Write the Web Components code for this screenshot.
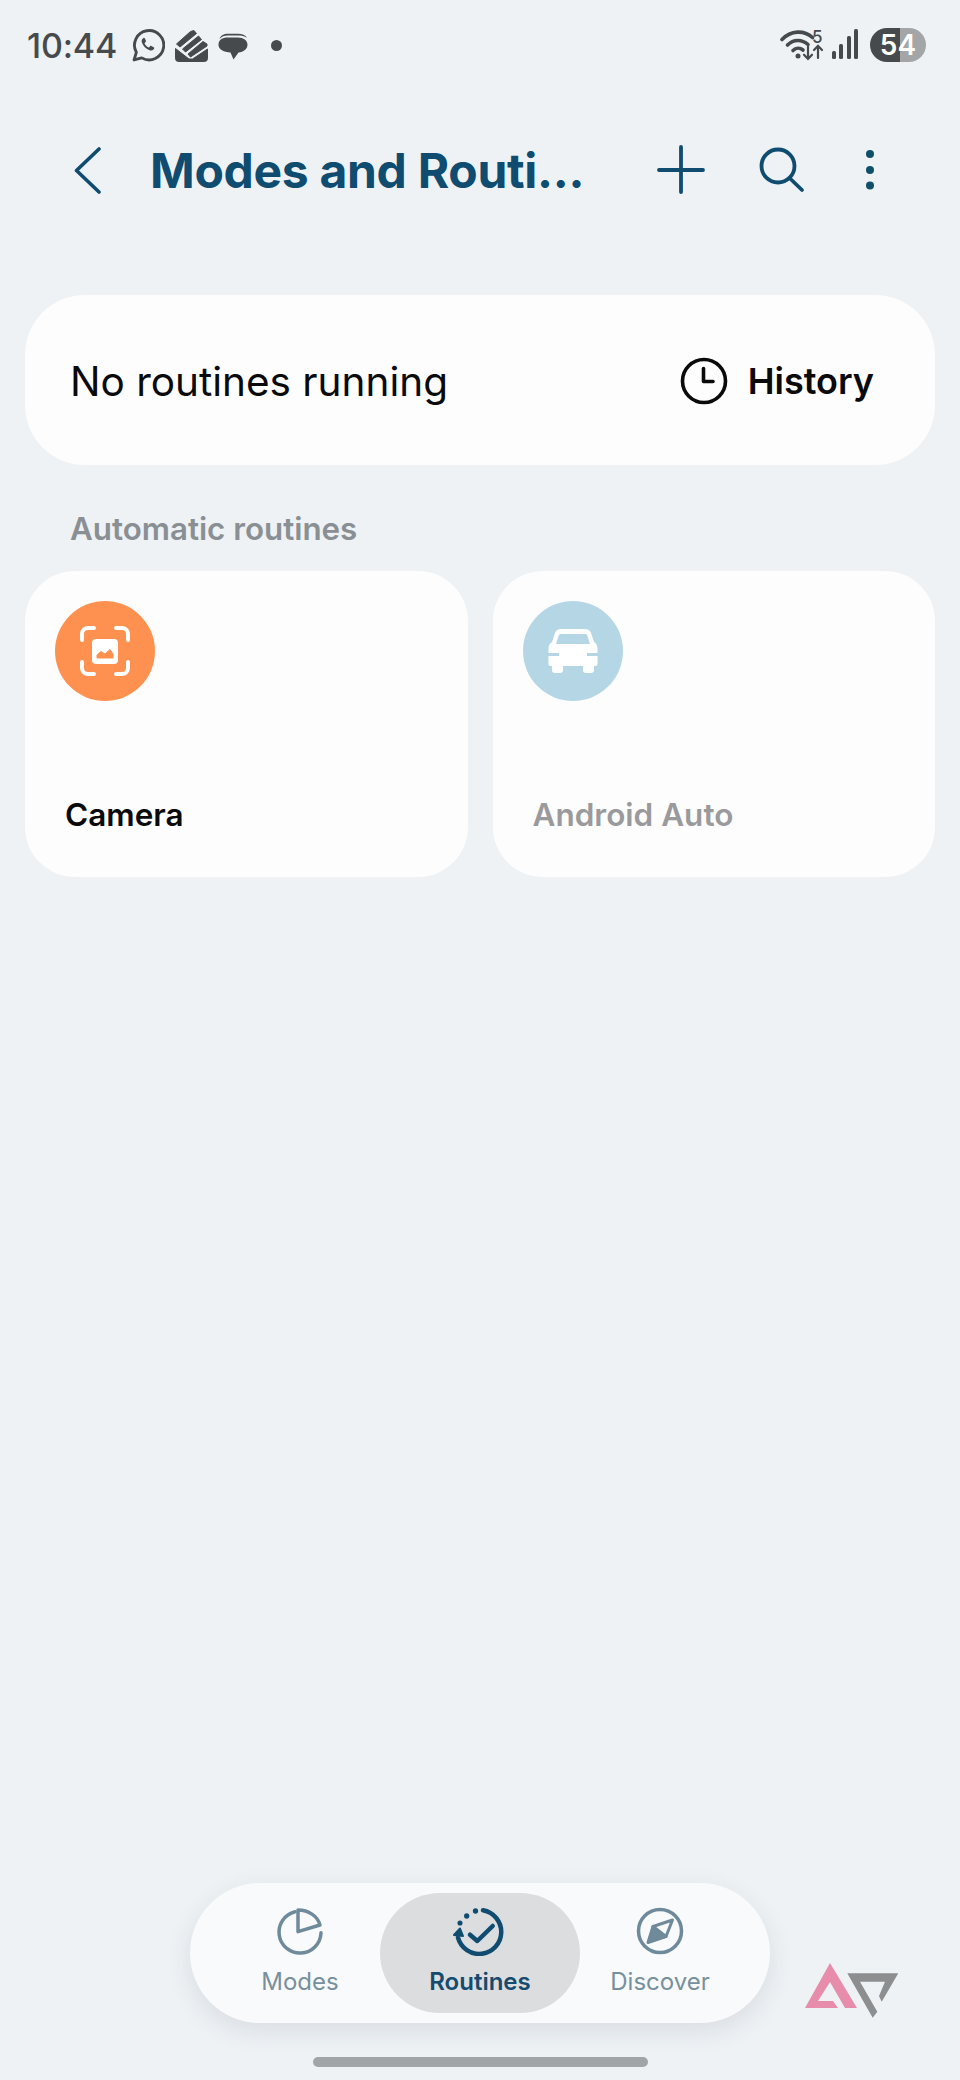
<!DOCTYPE html>
<html>
<head>
<meta charset="utf-8">
<title>Modes and Routines</title>
<style>
  html, body { margin: 0; padding: 0; background: #eef2f5; }
  body { font-family: Inter, "Liberation Sans", sans-serif; }
</style>
</head>
<body>
<routines-screen>
  <status-bar slot="status"></status-bar>
  <app-bar slot="top" title="Modes and Routi..."></app-bar>
  <running-card slot="content"></running-card>
  <section-label slot="content">Automatic routines</section-label>
  <routine-grid slot="content">
    <routine-card icon="camera" color="#ff9150">Camera</routine-card>
    <routine-card icon="car" color="#b5d7e5" disabled>Android Auto</routine-card>
  </routine-grid>
  <bottom-nav slot="nav">
    <nav-tab icon="modes" label="Modes"></nav-tab>
    <nav-tab icon="routines" label="Routines" active></nav-tab>
    <nav-tab icon="discover" label="Discover"></nav-tab>
  </bottom-nav>
  <ap-logo slot="nav"></ap-logo>
</routines-screen>

<script>
  (function initRoutinesPage() {
    class RoutinesScreen extends HTMLElement {
      constructor() {
        super();
        this.attachShadow({ mode: "open" });
        this.shadowRoot.innerHTML = `
          <style>
            :host { display: flex; flex-direction: column; width: 960px; height: 2080px; background: #eef2f5; overflow: hidden; position: relative; }
            .content { flex: 1; display: flex; flex-direction: column; padding: 45px 25px 0; }
            .handle { width: 335px; height: 10px; border-radius: 5px; background: #a1a5a8; margin: 34px auto 13px; }
          </style>
          <slot name="status"></slot>
          <slot name="top"></slot>
          <div class="content"><slot name="content"></slot></div>
          <slot name="nav"></slot>
          <div class="handle"></div>
        `;
      }
    }

    class StatusBar extends HTMLElement {
      constructor() {
        super();
        this.attachShadow({ mode: "open" });
        this.shadowRoot.innerHTML = `
          <style>
            :host { display: flex; align-items: center; height: 90px; padding: 0 34px 0 27px; color: #474a4c; }
            .time { font-size: 34px; font-weight: 500; width: 105px; letter-spacing: -0.2px; }
            .left { display: flex; align-items: center; flex: 1; }
            svg { display: block; flex: none; }
            .right { display: flex; align-items: center; }
            .battery { width: 56px; height: 34px; margin-left: 10px; border-radius: 17px; position: relative; overflow: hidden;
              background: linear-gradient(to right, #474a4c 0 30px, #a3a5a7 30px); color: #fff; font-size: 28px; font-weight: 600;
              display: flex; align-items: center; justify-content: center; }
            svg text { font-family: Inter, sans-serif; font-size: 17px; font-weight: 500; fill: #474a4c; }
          </style>
          <div class="left">
            <span class="time">10:44</span>
            <svg width="33" height="33" viewBox="0 0 32 32" fill="none">
              <path d="M2 30 4.200 22.600A14.200 14.200 0 1 1 9.500 28Z" stroke="#474a4c" stroke-width="2.800" stroke-linejoin="round"/>
              <path d="M11.300 8.800c-1.600.6-2.400 2.400-1.700 4.400 1.200 3.500 3.900 6.200 7.500 7.500 2 .7 3.800-.1 4.400-1.700.2-.7.1-1.100-.4-1.400l-2.300-1.200c-.5-.3-.9-.2-1.200.2l-.8 1c-.3.3-.6.4-1 .2-1.500-.7-2.800-2-3.500-3.500-.2-.4-.1-.7.2-1l.8-.9c.3-.3.4-.7.2-1.100l-1-2.200c-.3-.6-.7-.7-1.400-.5Z" fill="#474a4c"/>
            </svg>
            <svg width="33" height="33" viewBox="0 0 33 33" style="margin-left:10px" fill="#474a4c" stroke="#474a4c" stroke-width="1" stroke-linejoin="round">
              <path d="M1.500 15 15.500 2.500 19 1.500 21.500 4.500 5 18Z"/>
              <path d="M7.500 20 23.500 7 26.500 10.500 10.500 23Z"/>
              <path d="M13 25 28 12.500 32 15 32 17 15.500 28Z"/>
              <path d="M.5 19.500 14 30 17.500 30 32.500 20V29.500a3 3 0 0 1-3 3H3.500a3 3 0 0 1-3-3Z"/>
            </svg>
            <svg width="30" height="30" viewBox="0 0 30 30" style="margin-left:10px" fill="#474a4c">
              <path d="M1.500 9C2.500 5.500 6 3.800 10 3.800H20C24 3.800 27.500 5 29 8 26.500 5.700 23.500 5.500 20 5.500H9.500C6.500 5.500 3.500 6.500 1.500 9Z"/>
              <path d="M9.500 7.500H20C25.500 7.500 29.500 10.500 29.500 14.700S25.500 22 20.500 22.500L15.500 29.500 12.500 22.500C6 22 .5 19.500 .5 14.700.5 10 4.500 7.500 9.500 7.500Z"/>
            </svg>
            <svg width="11" height="11" viewBox="0 0 11 11" style="margin-left:23px"><circle cx="5.500" cy="5.500" r="5.500" fill="#474a4c"/></svg>
          </div>
          <div class="right">
            <svg width="44" height="34" viewBox="0 0 44 34" fill="none" stroke="#474a4c" stroke-linecap="round">
              <path d="M2 11.500C11 2 24 2 32.500 9.500" stroke-width="3.600"/>
              <path d="M7.500 17C13.500 11 22 11 28 16.500" stroke-width="3.600"/>
              <path d="M13 22.500C16 19.500 20 19.500 23 22" stroke-width="3.600"/>
              <circle cx="18" cy="28" r="2.500" fill="#474a4c" stroke="none"/>
              <text x="32" y="15" stroke="none">5</text>
              <path d="M28 18.500V31M24 26.700 28 31 32 26.700" stroke-width="2.200"/>
              <path d="M38 30V18M34 22 38 17.800 42 22" stroke-width="2.200"/>
            </svg>
            <svg width="30" height="32" viewBox="0 0 30 32" style="margin-left:6px" fill="#474a4c">
              <rect x="2" y="22" width="4" height="8" rx="1.500"/>
              <rect x="9" y="15" width="4" height="15" rx="1.500"/>
              <rect x="17" y="7" width="4" height="23" rx="1.500"/>
              <rect x="24" y="0" width="4" height="30" rx="1.500"/>
            </svg>
            <span class="battery">54</span>
          </div>
        `;
      }
    }

    class AppBar extends HTMLElement {
      constructor() {
        super();
        this.attachShadow({ mode: "open" });
        const title = this.getAttribute("title");
        this.shadowRoot.innerHTML = `
          <style>
            :host { display: flex; align-items: center; height: 160px; padding-left: 74px; color: #0f4c70; }
            h1 { margin: 0 0 0 48px; flex: 1; font-size: 48px; font-weight: 700; letter-spacing: -0.3px; white-space: nowrap; color: #0f4c70; }
            svg { display: block; flex: none; }
          </style>
          <svg width="28" height="48" viewBox="0 0 28 48" fill="none" stroke="#0f4c70" stroke-width="3.600" stroke-linecap="round" stroke-linejoin="round">
            <path d="M25 3 2.500 24.500 25 46"/>
          </svg>
          <h1>${title}</h1>
          <svg width="48" height="50" viewBox="0 0 48 50" fill="none" stroke="#0f4c70" stroke-width="3.800" stroke-linecap="round"><path d="M24 2V47M2 25H46"/></svg>
          <svg width="46" height="46" viewBox="0 0 46 46" style="margin-left:54px" fill="none" stroke="#0f4c70" stroke-width="3.800" stroke-linecap="round"><circle cx="19" cy="19" r="16.500"/><path d="M30.500 31 43 43"/></svg>
          <svg width="10" height="42" viewBox="0 0 10 42" style="margin:0 85px 0 60px" fill="#0f5068"><circle cx="5" cy="5" r="4"/><circle cx="5" cy="21" r="4"/><circle cx="5" cy="36.500" r="4"/></svg>
        `;
      }
    }

    class RunningCard extends HTMLElement {
      constructor() {
        super();
        this.attachShadow({ mode: "open" });
        this.shadowRoot.innerHTML = `
          <style>
            :host { display: flex; align-items: center; justify-content: space-between; height: 170px; padding: 2px 61px 0 45px; border-radius: 60px; background: #fdfdfd; color: #0a0a0a; box-sizing: border-box; }
            .state { font-size: 40.500px; font-weight: 400; }
            .history { display: flex; align-items: center; gap: 20px; font-size: 36px; font-weight: 600; }
            svg { display: block; }
          </style>
          <span class="state">No routines running</span>
          <span class="history">
            <svg width="48" height="48" viewBox="0 0 48 48" fill="none" stroke="#0a0a0a" stroke-width="3.600" stroke-linecap="round" stroke-linejoin="round"><circle cx="24" cy="24" r="21.500"/><path d="M23.500 11.500V24.500H33"/></svg>
            History
          </span>
        `;
      }
    }

    class SectionLabel extends HTMLElement {
      constructor() {
        super();
        this.attachShadow({ mode: "open" });
        this.shadowRoot.innerHTML = `
          <style>
            :host { display: block; margin: 45px 0 0 45px; height: 61px; font-size: 31.300px; font-weight: 600; line-height: 38px; color: #8a8f94; }
          </style>
          <slot></slot>
        `;
      }
    }

    class RoutineGrid extends HTMLElement {
      constructor() {
        super();
        this.attachShadow({ mode: "open" });
        this.shadowRoot.innerHTML = `
          <style>
            :host { display: grid; grid-template-columns: 1fr 1fr; gap: 25px; }
          </style>
          <slot></slot>
        `;
      }
    }

    const ROUTINE_ICONS = {
      camera: `
        <svg width="52" height="52" viewBox="0 0 52 52" fill="none">
          <path d="M3 15V9a6 6 0 0 1 6-6H15M37 3h6a6 6 0 0 1 6 6v6M49 37v6a6 6 0 0 1-6 6H37M15 49H9a6 6 0 0 1-6-6V37" stroke="#fff" stroke-width="4" stroke-linecap="round"/>
          <rect x="13" y="14" width="26" height="25" rx="4" fill="#fff"/>
          <path d="M18 33V30L22 26.500 26 29 31 24.500 34 29V33Z" fill="#ff9150" stroke="#ff9150" stroke-width="1" stroke-linejoin="round"/>
        </svg>`,
      car: `
        <svg width="50" height="44" viewBox="0 0 50 44" fill="#fff">
          <path d="M13 0H37C40 0 42 1.500 43 4L46 13C48.500 14.500 49.500 17 49.500 20V24H39V27H49.500V35C49.500 36.500 48.500 37 47 37H46V41C46 43 45 44 43 44H38C36 44 35 43 35 41V37H15V41C15 43 14 44 12 44H7C5 44 4 43 4 41V37H3C1.500 37 .5 36.500 .5 35V27H11V24H.5V20C.5 17 1.500 14.500 4 13L7 4C8 1.500 10 0 13 0Z"/>
          <path d="M13.500 5H36.500C38 5 39 5.500 39.500 7L42 15H8L10.500 7C11 5.500 12 5 13.500 5Z" fill="#b5d7e5"/>
        </svg>`,
    };

    class RoutineCard extends HTMLElement {
      constructor() {
        super();
        this.attachShadow({ mode: "open" });
        const disabled = this.hasAttribute("disabled");
        this.shadowRoot.innerHTML = `
          <style>
            :host { display: flex; flex-direction: column; justify-content: space-between; height: 306px; box-sizing: border-box; padding: 30px 30px 43px; border-radius: 50px; background: #fdfdfd; }
            .badge { width: 100px; height: 100px; border-radius: 50%; background: ${this.getAttribute("color")}; display: flex; align-items: center; justify-content: center; }
            .name { margin-left: 10px; font-size: 31.500px; font-weight: 600; line-height: 38px; color: ${disabled ? "#9a9a9d" : "#0a0a0a"}; }
            svg { display: block; }
          </style>
          <div class="badge">${ROUTINE_ICONS[this.getAttribute("icon")]}</div>
          <div class="name"><slot></slot></div>
        `;
      }
    }

    class BottomNav extends HTMLElement {
      constructor() {
        super();
        this.attachShadow({ mode: "open" });
        this.shadowRoot.innerHTML = `
          <style>
            :host { display: flex; align-self: center; align-items: center; justify-content: center; width: 580px; height: 140px; border-radius: 70px; background: #f9fafb; box-shadow: 0 8px 26px rgba(40, 50, 60, .1); }
          </style>
          <slot></slot>
        `;
      }
    }

    const TAB_ICONS = {
      modes: `
        <svg width="50" height="50" viewBox="0 0 50 50" fill="none" stroke="#6f8b9b" stroke-width="3.500" stroke-linecap="round" stroke-linejoin="round">
          <path d="M20 5.700A21 21 0 1 0 46 26.700"/>
          <path d="M23 4V25.700L45 19C42.500 10 33.500 4 23 4Z"/>
        </svg>`,
      routines: `
        <svg width="54" height="50" viewBox="0 0 54 50" fill="none" stroke="#0f4c70" stroke-linecap="round" stroke-linejoin="round">
          <path d="M30 4.300A22 22 0 1 1 5 31.700" stroke-width="4.500"/>
          <path d="M1 29 7 22.500 10 30Z" fill="#0f4c70" stroke-width="2"/>
          <circle cx="7" cy="17" r="1.800" fill="#0f4c70" stroke-width="1.500"/>
          <circle cx="13.700" cy="10" r="1.900" fill="#0f4c70" stroke-width="1.500"/>
          <circle cx="22.500" cy="5" r="1.900" fill="#0f4c70" stroke-width="1.500"/>
          <path d="M17 28.700 24.300 35 39.700 20" stroke-width="4.500"/>
        </svg>`,
      discover: `
        <svg width="50" height="50" viewBox="0 0 50 50" fill="none" stroke="#6f8b9b" stroke-width="3.500" stroke-linecap="round" stroke-linejoin="round">
          <circle cx="25" cy="25" r="21.500"/>
          <path d="M37.500 14 31 30.500 13 36.500 18 20.500Z" stroke-width="3"/>
          <path d="M18 20.500 31 30.500" stroke-width="3"/>
          <path d="M13 36.500 31 30.500 18 20.500Z" fill="#6f8b9b" stroke-width="2"/>
        </svg>`,
    };

    class NavTab extends HTMLElement {
      constructor() {
        super();
        this.attachShadow({ mode: "open" });
        const active = this.hasAttribute("active");
        this.shadowRoot.innerHTML = `
          <style>
            :host { display: flex; flex-direction: column; align-items: center; justify-content: flex-start; box-sizing: border-box; width: ${active ? "200px" : "160px"}; height: 120px; padding-top: 13px; border-radius: 60px; background: ${active ? "#dcdddf" : "transparent"}; }
            svg { display: block; height: 50px; }
            span { margin-top: 11px; font-size: 24px; line-height: 30px; font-weight: ${active ? 600 : 400}; color: ${active ? "#154b6e" : "#77909e"}; }
          </style>
          ${TAB_ICONS[this.getAttribute("icon")]}
          <span>${this.getAttribute("label")}</span>
        `;
      }
    }

    class ApLogo extends HTMLElement {
      constructor() {
        super();
        this.attachShadow({ mode: "open" });
        this.shadowRoot.innerHTML = `
          <style>
            :host { position: absolute; left: 804px; top: 1962px; display: block; width: 96px; height: 58px; }
            svg { display: block; }
          </style>
          <svg width="96" height="58" viewBox="0 0 96 58">
            <path d="M26 1 53 46H41L26 20 14 39H29L34 46H1Z" fill="#e88cab"/>
            <path d="M43.300 11.300H94.300L77.700 39.700 75 34 81 19.700H56L73.300 49.700 68.700 55.700Z" fill="#8c8e90"/>
          </svg>
        `;
      }
    }

    customElements.define("routines-screen", RoutinesScreen);
    customElements.define("status-bar", StatusBar);
    customElements.define("app-bar", AppBar);
    customElements.define("running-card", RunningCard);
    customElements.define("section-label", SectionLabel);
    customElements.define("routine-grid", RoutineGrid);
    customElements.define("routine-card", RoutineCard);
    customElements.define("bottom-nav", BottomNav);
    customElements.define("nav-tab", NavTab);
    customElements.define("ap-logo", ApLogo);
  })();
</script>
</body>
</html>
